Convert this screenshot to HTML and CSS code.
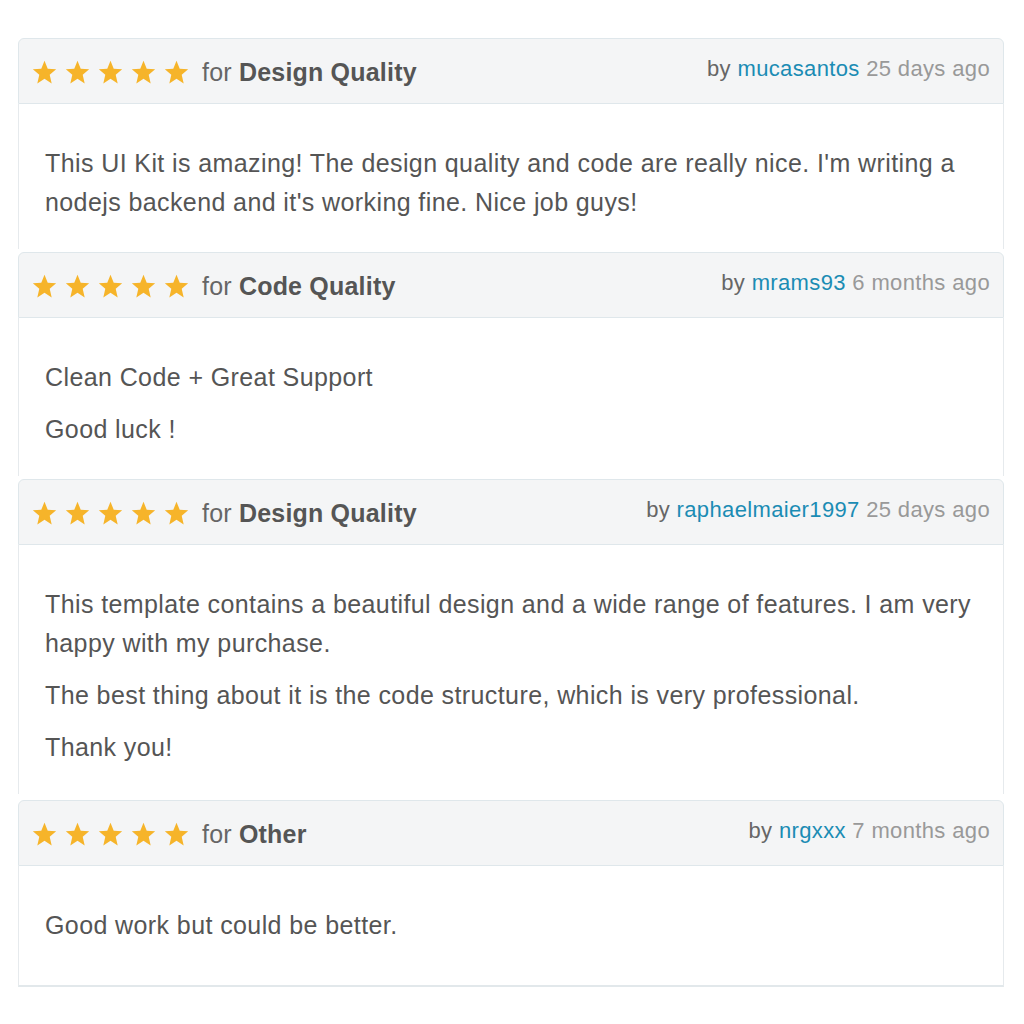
FILE: index.html
```html
<!DOCTYPE html>
<html lang="en">
<head>
    <meta charset="UTF-8">
    <meta name="viewport" content="width=device-width, initial-scale=1.0">
    <title>Reviews</title>
    <link rel="stylesheet" href="styles.css">
</head>
<body>
    <div class="reviews">
        <div class="review">
            <div class="review-header">
                <div class="rating">
                    <span class="stars">
                        <svg viewBox="0 0 24 24"><polygon points="12,0.8 15.1,8.3 23.2,8.9 17,14.1 18.9,22.6 12,18.1 5.1,22.6 7,14.1 0.8,8.9 8.9,8.3"/></svg>
                        <svg viewBox="0 0 24 24"><polygon points="12,0.8 15.1,8.3 23.2,8.9 17,14.1 18.9,22.6 12,18.1 5.1,22.6 7,14.1 0.8,8.9 8.9,8.3"/></svg>
                        <svg viewBox="0 0 24 24"><polygon points="12,0.8 15.1,8.3 23.2,8.9 17,14.1 18.9,22.6 12,18.1 5.1,22.6 7,14.1 0.8,8.9 8.9,8.3"/></svg>
                        <svg viewBox="0 0 24 24"><polygon points="12,0.8 15.1,8.3 23.2,8.9 17,14.1 18.9,22.6 12,18.1 5.1,22.6 7,14.1 0.8,8.9 8.9,8.3"/></svg>
                        <svg viewBox="0 0 24 24"><polygon points="12,0.8 15.1,8.3 23.2,8.9 17,14.1 18.9,22.6 12,18.1 5.1,22.6 7,14.1 0.8,8.9 8.9,8.3"/></svg>
                    </span>
                    <span class="category">for <strong>Design Quality</strong></span>
                </div>
                <div class="meta">by <a href="#">mucasantos</a> <span class="time">25 days ago</span></div>
            </div>
            <div class="review-body">
                <p>This UI Kit is amazing! The design quality and code are really nice. I'm writing a nodejs backend and it's working fine. Nice job guys!</p>
            </div>
        </div>

        <div class="review">
            <div class="review-header">
                <div class="rating">
                    <span class="stars">
                        <svg viewBox="0 0 24 24"><polygon points="12,0.8 15.1,8.3 23.2,8.9 17,14.1 18.9,22.6 12,18.1 5.1,22.6 7,14.1 0.8,8.9 8.9,8.3"/></svg>
                        <svg viewBox="0 0 24 24"><polygon points="12,0.8 15.1,8.3 23.2,8.9 17,14.1 18.9,22.6 12,18.1 5.1,22.6 7,14.1 0.8,8.9 8.9,8.3"/></svg>
                        <svg viewBox="0 0 24 24"><polygon points="12,0.8 15.1,8.3 23.2,8.9 17,14.1 18.9,22.6 12,18.1 5.1,22.6 7,14.1 0.8,8.9 8.9,8.3"/></svg>
                        <svg viewBox="0 0 24 24"><polygon points="12,0.8 15.1,8.3 23.2,8.9 17,14.1 18.9,22.6 12,18.1 5.1,22.6 7,14.1 0.8,8.9 8.9,8.3"/></svg>
                        <svg viewBox="0 0 24 24"><polygon points="12,0.8 15.1,8.3 23.2,8.9 17,14.1 18.9,22.6 12,18.1 5.1,22.6 7,14.1 0.8,8.9 8.9,8.3"/></svg>
                    </span>
                    <span class="category">for <strong>Code Quality</strong></span>
                </div>
                <div class="meta">by <a href="#">mrams93</a> <span class="time">6 months ago</span></div>
            </div>
            <div class="review-body">
                <p>Clean Code + Great Support</p>
                <p>Good luck !</p>
            </div>
        </div>

        <div class="review">
            <div class="review-header">
                <div class="rating">
                    <span class="stars">
                        <svg viewBox="0 0 24 24"><polygon points="12,0.8 15.1,8.3 23.2,8.9 17,14.1 18.9,22.6 12,18.1 5.1,22.6 7,14.1 0.8,8.9 8.9,8.3"/></svg>
                        <svg viewBox="0 0 24 24"><polygon points="12,0.8 15.1,8.3 23.2,8.9 17,14.1 18.9,22.6 12,18.1 5.1,22.6 7,14.1 0.8,8.9 8.9,8.3"/></svg>
                        <svg viewBox="0 0 24 24"><polygon points="12,0.8 15.1,8.3 23.2,8.9 17,14.1 18.9,22.6 12,18.1 5.1,22.6 7,14.1 0.8,8.9 8.9,8.3"/></svg>
                        <svg viewBox="0 0 24 24"><polygon points="12,0.8 15.1,8.3 23.2,8.9 17,14.1 18.9,22.6 12,18.1 5.1,22.6 7,14.1 0.8,8.9 8.9,8.3"/></svg>
                        <svg viewBox="0 0 24 24"><polygon points="12,0.8 15.1,8.3 23.2,8.9 17,14.1 18.9,22.6 12,18.1 5.1,22.6 7,14.1 0.8,8.9 8.9,8.3"/></svg>
                    </span>
                    <span class="category">for <strong>Design Quality</strong></span>
                </div>
                <div class="meta">by <a href="#">raphaelmaier1997</a> <span class="time">25 days ago</span></div>
            </div>
            <div class="review-body">
                <p>This template contains a beautiful design and a wide range of features. I am very happy with my purchase.</p>
                <p>The best thing about it is the code structure, which is very professional.</p>
                <p>Thank you!</p>
            </div>
        </div>

        <div class="review last">
            <div class="review-header">
                <div class="rating">
                    <span class="stars">
                        <svg viewBox="0 0 24 24"><polygon points="12,0.8 15.1,8.3 23.2,8.9 17,14.1 18.9,22.6 12,18.1 5.1,22.6 7,14.1 0.8,8.9 8.9,8.3"/></svg>
                        <svg viewBox="0 0 24 24"><polygon points="12,0.8 15.1,8.3 23.2,8.9 17,14.1 18.9,22.6 12,18.1 5.1,22.6 7,14.1 0.8,8.9 8.9,8.3"/></svg>
                        <svg viewBox="0 0 24 24"><polygon points="12,0.8 15.1,8.3 23.2,8.9 17,14.1 18.9,22.6 12,18.1 5.1,22.6 7,14.1 0.8,8.9 8.9,8.3"/></svg>
                        <svg viewBox="0 0 24 24"><polygon points="12,0.8 15.1,8.3 23.2,8.9 17,14.1 18.9,22.6 12,18.1 5.1,22.6 7,14.1 0.8,8.9 8.9,8.3"/></svg>
                        <svg viewBox="0 0 24 24"><polygon points="12,0.8 15.1,8.3 23.2,8.9 17,14.1 18.9,22.6 12,18.1 5.1,22.6 7,14.1 0.8,8.9 8.9,8.3"/></svg>
                    </span>
                    <span class="category">for <strong>Other</strong></span>
                </div>
                <div class="meta">by <a href="#">nrgxxx</a> <span class="time">7 months ago</span></div>
            </div>
            <div class="review-body">
                <p>Good work but could be better.</p>
            </div>
        </div>
    </div>
</body>
</html>
```

FILE: styles.css
```css
body {
    font-family: 'Liberation Sans', Arial, sans-serif;
    margin: 0;
    padding: 0;
    background: #fff;
    color: #555;
}
.reviews {
    padding: 38px 20px 0 18px;
    display: flex;
    flex-direction: column;
    gap: 3px;
}
.review-header {
    display: flex;
    justify-content: space-between;
    align-items: center;
    height: 66px;
    box-sizing: border-box;
    padding: 0 13px 0 13px;
    background: #f4f5f6;
    border: 1px solid #dfe7eb;
    border-radius: 6px 6px 0 0;
}
.rating {
    display: flex;
    align-items: center;
    margin-top: 3px;
}
.stars {
    display: flex;
    gap: 8px;
    margin-right: 13px;
}
.stars svg {
    width: 25px;
    height: 25px;
    fill: #f6b42a;
}
.category {
    font-size: 25px;
    letter-spacing: 0.2px;
    color: #666;
}
.category strong {
    color: #555;
}
.meta {
    font-size: 22px;
    letter-spacing: 0.36px;
    color: #666;
    margin-top: -5px;
}
.meta a {
    color: #1b8cb4;
    text-decoration: none;
}
.meta .time {
    color: #999;
}
.review-body {
    padding: 27px 26px 14px 26px;
    border-left: 1px solid #e6eaed;
    border-right: 1px solid #e6eaed;
}
.review-body p {
    margin: 13px 0;
    font-size: 25px;
    letter-spacing: 0.4px;
    line-height: 39px;
}
.review.last {
    margin-top: 3px;
}
.review.last .review-body {
    padding-bottom: 27px;
    border-bottom: 2px solid #e2e8eb;
}
```
